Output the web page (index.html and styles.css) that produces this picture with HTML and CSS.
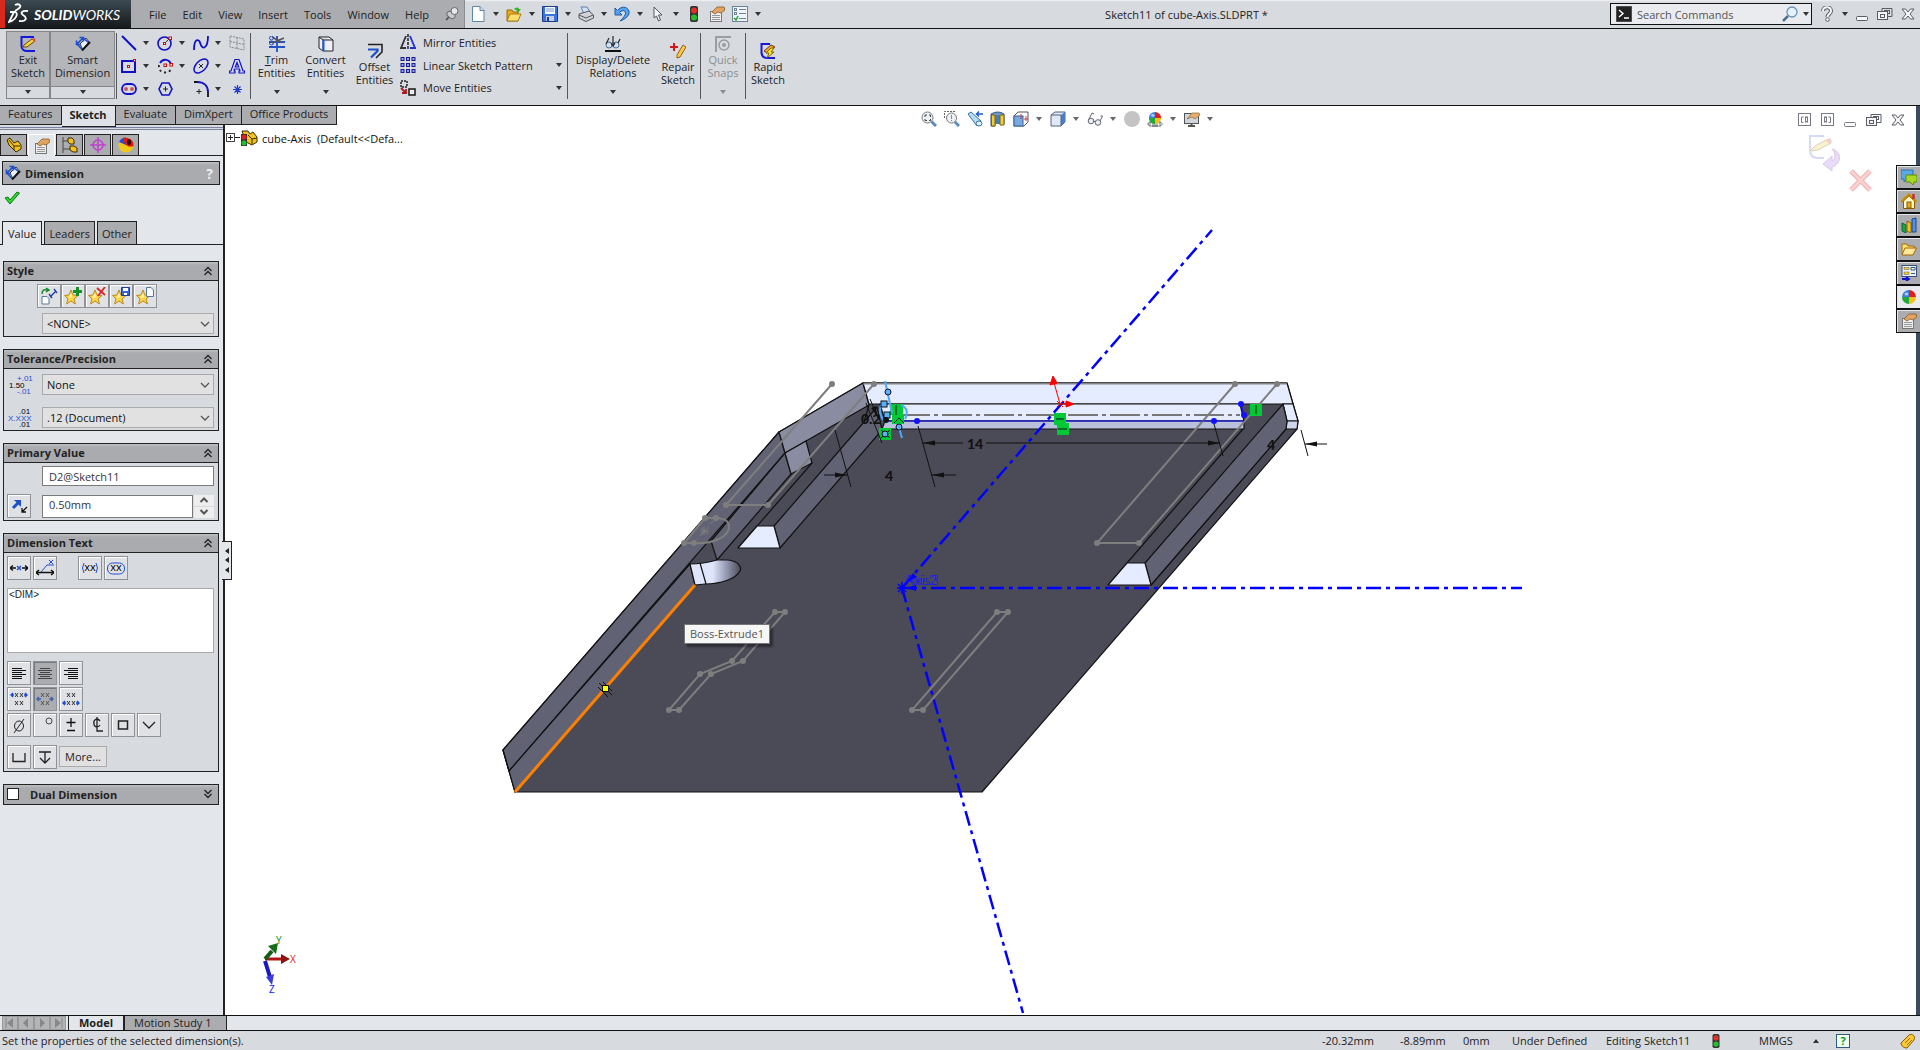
FILE: index.html
```html
<!DOCTYPE html>
<html lang="en">
<head>
    <meta charset="UTF-8">
    <meta name="viewport" content="width=device-width, initial-scale=1.0">
    <title>Sketch11 of cube-Axis.SLDPRT *</title>
    <link rel="stylesheet" href="styles.css">
</head>
<body>
    <svg class="defs" aria-hidden="true">
        <symbol id="star" viewBox="0 0 18 18"><path d="M7 3 L9 8 L14 8.500 L10 12 L11.500 17 L7 14 L2.500 17 L4 12 L0.500 8.500 L5 8 Z" fill="#ffd54a" stroke="#b98a1c"/><path d="M7 6 L8 9.500 L5 12 L5 9.500 Z" fill="#fff3b8"/></symbol>
        <symbol id="chev-up" viewBox="0 0 10 10"><path d="M1.500 5 L5 1.500 L8.500 5 M1.500 9 L5 5.500 L8.500 9" fill="none" stroke="#222" stroke-width="1.300"/></symbol>
        <symbol id="chev-down" viewBox="0 0 10 10"><path d="M1.500 1 L5 4.500 L8.500 1 M1.500 5 L5 8.500 L8.500 5" fill="none" stroke="#222" stroke-width="1.300"/></symbol>
        <symbol id="arrow-down" viewBox="0 0 10 6"><path d="M1 1 L5 5 L9 1" fill="none" stroke="#555" stroke-width="1.300"/></symbol>
        <symbol id="traffic" viewBox="0 0 16 16"><rect x="4" y="0" width="8" height="16" rx="2" fill="#333"/><circle cx="8" cy="4.500" r="3" fill="#e0302a"/><circle cx="8" cy="11.500" r="3" fill="#22c02c"/></symbol>
        <symbol id="hand-page" viewBox="0 0 16 16"><rect x="1.500" y="5.500" width="11" height="10" fill="#eee" stroke="#777"/><path d="M3 9.500 H11 M3 11.500 H11 M3 13.500 H11" stroke="#999"/><path d="M3 6 L8 1 L15 1 L16 4 L12 7 L9 6 L6 8 Z" fill="#e0a460" stroke="#7c4f1c" stroke-width=".7"/></symbol>
        <symbol id="dim" viewBox="0 0 16 16"><path d="M5 8 L11 2 L14 6 L8 14 Z" fill="#e8eefc" stroke="#333"/><path d="M1.500 8.500 L8.500 1.500 M1.500 4.500 V8.500 H5.500 M4.500 1.500 H8.500 V5.500" stroke="#1c4fd0" fill="none" stroke-width="1.600"/><path d="M2 8 L7 13.500 M8 2 L14 7" stroke="#1c4fd0" stroke-width="1.400"/><path d="M7 14.500 L15 6" stroke="#111" stroke-width="2"/></symbol>
        <symbol id="ball" viewBox="0 0 16 16"><path d="M8 8 V1 A7 7 0 0 0 1 8 Z" fill="#3a80e0"/><path d="M8 8 H15 A7 7 0 0 0 8 1 Z" fill="#e02020"/><path d="M8 8 H1 A7 7 0 0 0 8 15 Z" fill="#20a838"/><path d="M8 8 V15 A7 7 0 0 0 15 8 Z" fill="#f4c020"/><ellipse cx="5.500" cy="5" rx="2" ry="1.500" fill="#fff" opacity=".6"/></symbol>
        <symbol id="restore" viewBox="0 0 16 14"><path d="M5 1.500 H15 V9.500 H11 M5 1.500 V4.500" fill="none" stroke="#5a5d66"/><rect x="7.500" y="3.500" width="5" height="3" fill="none" stroke="#5a5d66"/><rect x=".5" y="4.500" width="10" height="8" fill="#f4f5f7" stroke="#5a5d66"/><rect x="3.500" y="7.500" width="4" height="3" fill="none" stroke="#5a5d66"/></symbol>
        <symbol id="close" viewBox="0 0 14 14"><path d="M1 2 H4.500 L7 5 L9.500 2 H13 L9 7 L13 12 H9.500 L7 9 L4.500 12 H1 L5 7 Z" fill="#f8f8fa" stroke="#5a5d66"/></symbol>
        <symbol id="part" viewBox="0 0 16 16"><path d="M1 3 L4 1 L8 6 L12 4 L15 8 V12 L10 15 L6 11 L3 8 Z" fill="#f2c11e" stroke="#3a2c00"/><path d="M3 3 L8 9 L14 9 M8 9 V13" fill="none" stroke="#3a2c00"/></symbol>
    </svg>

    <header class="menubar">
        <div class="logo">
            <svg width="22" height="22" viewBox="0 0 22 22"><path d="M7 2 C11 0 15 3 10 6 L7 8 M2 9 H7 C11 10 8 17 1 19 L6 9 M20 8 C14 7 12 10 15 12 C20 15 18 19 11 18" fill="none" stroke="#fff" stroke-width="1.800"/></svg>
            <span><b>SOLID</b>WORKS</span>
        </div>
        <nav class="menus">
            <button>File</button><button>Edit</button><button>View</button><button>Insert</button><button>Tools</button><button>Window</button><button>Help</button>
            <svg class="pin" width="14" height="14" viewBox="0 0 14 14"><path d="M1 13 L5 9" stroke="#444" stroke-width="1.500"/><ellipse cx="6" cy="8" rx="4.500" ry="3" transform="rotate(35 6 8)" fill="#c8cacf" stroke="#66686e"/><circle cx="9.500" cy="4" r="3.500" fill="#e8e8ec" stroke="#66686e"/></svg>
        </nav>
        <div class="quick">
            <button aria-label="New"><svg width="16" height="16" viewBox="0 0 16 16"><path d="M2.500 .5 H10 L14 4.500 V15.500 H2.500 Z" fill="#fdfeff" stroke="#5d86a8"/><path d="M10 .5 V4.500 H14" fill="#cfe0ee" stroke="#5d86a8"/></svg></button><i class="caret"></i>
            <button aria-label="Open"><svg width="16" height="16" viewBox="0 0 16 16"><path d="M1 4 H6 L7 6 H12 V15 H1 Z" fill="#e9a91c" stroke="#9c6a08"/><path d="M4 8 H15 L12 15 H1 Z" fill="#ffdf70" stroke="#b07c10"/><path d="M8 4 C9 1 12 1 13 3 L15 3 L12 7 L9.500 3 H11" fill="#3ab02c"/></svg></button><i class="caret"></i>
            <button aria-label="Save"><svg width="16" height="16" viewBox="0 0 16 16"><path d="M.5 .5 H15.500 V15.500 H.5 Z" fill="#3b74d8" stroke="#173c8c"/><rect x="3" y="1" width="10" height="7" fill="#f4f8ff"/><path d="M4 3 H12 M4 5 H12" stroke="#7c9ad0"/><rect x="4" y="10" width="8" height="5" fill="#c5cde0"/><rect x="5" y="11" width="2" height="4" fill="#173c8c"/></svg></button><i class="caret"></i>
            <button aria-label="Print"><svg width="16" height="16" viewBox="0 0 16 16"><path d="M3 1 H9 L12 6 L6 8 Z" fill="#cfe4fa" stroke="#5b80ac"/><path d="M1 8 L11 5 L15.500 9 V12 L8 15.500 L1 12 Z" fill="#d2d3d6" stroke="#55575c"/><path d="M1 9 L8 12 L15 9" fill="none" stroke="#55575c"/></svg></button><i class="caret"></i>
            <button aria-label="Undo"><svg width="16" height="16" viewBox="0 0 16 16"><path d="M1 2 V9 H8 L5.500 6.500 C9 3 13 5 11 9 C10 11 8 13 6 15 C12 13 16 9 15 5 C13 0 7 0 3.500 4.500 Z" fill="#56a2ec" stroke="#1c5aa8"/></svg></button><i class="caret"></i>
            <button aria-label="Select"><svg width="16" height="16" viewBox="0 0 16 16"><path d="M4 1 L12 9 H8.500 L10.500 14 L8.500 15 L6.500 10 L4 12 Z" fill="#f4f5f7" stroke="#55575c"/></svg></button><i class="caret"></i>
            <button aria-label="Rebuild"><svg width="16" height="16"><use href="#traffic"/></svg></button>
            <button aria-label="Properties"><svg width="16" height="16"><use href="#hand-page"/></svg></button>
            <button aria-label="Options"><svg width="16" height="16" viewBox="0 0 16 16"><rect x=".5" y=".5" width="15" height="15" fill="#eef4fa" stroke="#6d8296"/><rect x="2.500" y="2.500" width="2" height="2" fill="none" stroke="#6d8296"/><rect x="2.500" y="6.500" width="2" height="2" fill="none" stroke="#6d8296"/><path d="M7 3.500 H14 M7 7.500 H14 M7 12.500 H14" stroke="#6d8296"/><path d="M2 12 L4 14 L6 10" fill="none" stroke="#22a02c" stroke-width="1.500"/></svg></button><i class="caret"></i>
        </div>
        <div class="title">Sketch11 of cube-Axis.SLDPRT *</div>
        <div class="search">
            <svg width="16" height="16" viewBox="0 0 16 16"><rect width="16" height="16" fill="#222" stroke="#777"/><path d="M3 4 L7 7.500 L3 11 M8 12 H13" fill="none" stroke="#fff" stroke-width="1.400"/></svg>
            <input type="text" placeholder="Search Commands" aria-label="Search Commands">
            <svg width="16" height="16" viewBox="0 0 16 16"><path d="M1 15 L6 10" stroke="#4c7090" stroke-width="2.500"/><circle cx="10" cy="6" r="5" fill="#e4f2fc" stroke="#6f94b4" stroke-width="1.300"/></svg>
            <i class="caret"></i>
        </div>
        <div class="winbtns">
            <button aria-label="Help"><svg width="14" height="16" viewBox="0 0 14 16"><path d="M3 5 C3 0 11 0 11 5 C11 8 7.500 8 7.500 11" fill="none" stroke="#5a5d66" stroke-width="4"/><path d="M3 5 C3 0 11 0 11 5 C11 8 7.500 8 7.500 11" fill="none" stroke="#f8f8fa" stroke-width="2"/><circle cx="7.500" cy="13.500" r="1.800" fill="#f8f8fa" stroke="#5a5d66"/></svg></button><i class="caret"></i>
            <button aria-label="Minimize"><svg width="13" height="14" viewBox="0 0 13 14"><rect x=".5" y="9.500" width="11" height="4" rx="1" fill="#f8f8fa" stroke="#5a5d66"/></svg></button>
            <button aria-label="Restore"><svg width="16" height="14"><use href="#restore"/></svg></button>
            <button aria-label="Close"><svg width="14" height="14"><use href="#close"/></svg></button>
        </div>
    </header>

    <div class="ribbon">
        <button class="big pressed exit"><svg width="16" height="16" viewBox="0 0 16 16"><path d="M14 1 H1.500 V10 C1.500 13 4 15 7 15 H15" fill="none" stroke="#1618d8" stroke-width="2"/><path d="M4 9 L12 3 L15 5 L7 11 L3 11 Z" fill="#f8cf3c" stroke="#6a4a10"/><path d="M12 3 L15 2 L15.500 5 L14 6 Z" fill="#e05048"/></svg><span>Exit<br>Sketch</span><i class="caret"></i></button>
        <button class="big pressed smart"><svg width="16" height="16"><use href="#dim"/></svg><span>Smart<br>Dimension</span><i class="caret"></i></button>
        <div class="sep"></div>
        <div class="tools">
            <button aria-label="Line"><svg width="16" height="16" viewBox="0 0 16 16"><path d="M1 1 L15 15" stroke="#1010c8" stroke-width="2"/></svg><i class="caret"></i></button>
            <button aria-label="Circle"><svg width="16" height="16" viewBox="0 0 16 16"><circle cx="7.500" cy="8.500" r="6.500" fill="none" stroke="#1010c8" stroke-width="1.600"/><path d="M8 8 L12 4" stroke="#333"/><rect x="6.500" y="7.500" width="2" height="2" fill="#fff" stroke="#c01010"/><rect x="12" y="2" width="2.500" height="2.500" fill="#fff" stroke="#c01010"/></svg><i class="caret"></i></button>
            <button aria-label="Spline"><svg width="16" height="16" viewBox="0 0 16 16"><path d="M1 15 C1 3 6 3 7.500 9 C9 15 15 14 15 1" fill="none" stroke="#1010c8" stroke-width="1.800"/></svg><i class="caret"></i></button>
            <button aria-label="Plane"><svg width="16" height="16" viewBox="0 0 16 16"><path d="M1 1 L15 4 V15 L1 12 Z M1 6.500 L15 9.500 M8 2.500 V13.500" fill="none" stroke="#888" stroke-dasharray="2 1"/></svg></button>
            <button aria-label="Rectangle"><svg width="16" height="16" viewBox="0 0 16 16"><rect x="1" y="3" width="13" height="11" fill="none" stroke="#1010c8" stroke-width="2"/><rect x="6.500" y="7.500" width="2" height="2" fill="#fff" stroke="#c01010"/><rect x="12.500" y="1.500" width="2" height="2" fill="#fff" stroke="#c01010"/></svg><i class="caret"></i></button>
            <button aria-label="Arc"><svg width="16" height="16" viewBox="0 0 16 16"><path d="M3 5 C6 0 13 1 14 7" fill="none" stroke="#1010c8" stroke-width="1.800"/><path d="M2 7 C1 14 8 17 14 12" fill="none" stroke="#222" stroke-width="1.800" stroke-dasharray="2 3"/><rect x="7" y="6" width="2.500" height="2.500" fill="#fff" stroke="#c01010"/><rect x="13" y="5.500" width="2.500" height="2.500" fill="#fff" stroke="#c01010"/></svg><i class="caret"></i></button>
            <button aria-label="Ellipse"><svg width="16" height="16" viewBox="0 0 16 16"><ellipse cx="8" cy="8" rx="8.500" ry="5" transform="rotate(-45 8 8)" fill="none" stroke="#1010c8" stroke-width="1.500"/><path d="M6 6 L10 10 M10 6 L6 10" stroke="#222"/></svg><i class="caret"></i></button>
            <button aria-label="Text"><svg width="16" height="16" viewBox="0 0 16 16"><path d="M6 1.500 H10 L14 13 H15.500 V15 H10 V13 H11 L10.500 11 H5.500 L5 13 H6 V15 H.5 V13 H2 Z M8 4.500 L6.300 9 H9.700 Z" fill="#dde4fa" stroke="#1010c8" stroke-width="1.200"/></svg></button>
            <button aria-label="Slot"><svg width="16" height="16" viewBox="0 0 16 16"><rect x="1" y="3" width="14" height="10" rx="5" fill="none" stroke="#1010c8" stroke-width="1.800"/><rect x="4" y="7" width="2" height="2" fill="#fff" stroke="#c01010"/><rect x="10" y="7" width="2" height="2" fill="#fff" stroke="#c01010"/></svg><i class="caret"></i></button>
            <button aria-label="Polygon"><svg width="16" height="16" viewBox="0 0 16 16"><path d="M5 2 H12 L15 8 L12 14 H5 L2 8 Z" fill="none" stroke="#1010c8" stroke-width="1.600"/><path d="M8.500 5.500 V10.500 M6 8 H11" stroke="#222"/></svg></button>
            <button aria-label="Fillet"><svg width="16" height="16" viewBox="0 0 16 16"><path d="M1 1 H4" stroke="#111" stroke-width="2"/><path d="M4 1 C11 1 15 5 15 11" fill="none" stroke="#1010c8" stroke-width="1.800"/><path d="M15 11 V16" stroke="#111" stroke-width="1.800"/><path d="M6 8 V13 M3.500 10.500 H8.500" stroke="#222"/></svg><i class="caret"></i></button>
            <button aria-label="Point"><svg width="16" height="16" viewBox="0 0 16 16"><path d="M8.500 4 V13 M4 8.500 H13 M5.500 5.500 L11.500 11.500 M11.500 5.500 L5.500 11.500" stroke="#1c3cd0" stroke-width="1.200"/></svg></button>
        </div>
        <div class="sep"></div>
        <button class="big"><svg width="16" height="16" viewBox="0 0 16 16"><path d="M0 6 H16 M0 11 H16 M8 0 V16" stroke="#2450c8" stroke-width="1.800"/><path d="M3 1 L12 6 M3 7 L15 2" stroke="#555" stroke-width="1.500"/><circle cx="2.500" cy="2" r="2" fill="none" stroke="#2450c8"/><circle cx="2.500" cy="7" r="2" fill="none" stroke="#2450c8"/></svg><span><u>T</u>rim<br>Entities</span><i class="caret"></i></button>
        <button class="big"><svg width="16" height="16" viewBox="0 0 16 16"><path d="M1 1 H11 L15 4 V15 H5 L1 12 Z M1 1 L5 4 H15 M5 4 V15" fill="#eef0f5" stroke="#222"/><path d="M5.500 4 V15" stroke="#1c5ae0" stroke-width="2"/></svg><span>Convert<br>Entities</span><i class="caret"></i></button>
        <button class="big low"><svg width="16" height="16" viewBox="0 0 16 16"><path d="M1 1.500 H15 V9 L9 15" fill="none" stroke="#222" stroke-width="1.600"/><path d="M1 6.500 H10.500 V8 L4 14.500" fill="none" stroke="#1c4fd0" stroke-width="2.200"/></svg><span>Offset<br>Entities</span></button>
        <div class="rows">
            <button><svg width="16" height="16" viewBox="0 0 16 16"><path d="M6 2 L1 14 H6" fill="none" stroke="#333" stroke-width="1.800"/><path d="M10 2 L15 14 H10" fill="none" stroke="#1c30d0" stroke-width="1.800"/><path d="M8 0 V16" stroke="#222" stroke-width="1.500" stroke-dasharray="3 1"/></svg><span>Mirror Entities</span></button>
            <button><svg width="16" height="16" viewBox="0 0 16 16"><path d="M2.500 0 V16 M8 0 V16 M13.500 0 V16" stroke="#1c1c90" stroke-width="4" stroke-dasharray="4 2"/><path d="M2.500 1 V16 M8 1 V16 M13.500 1 V16" stroke="#8ea0f0" stroke-width="2" stroke-dasharray="2 4"/></svg><span>Linear Sketch Pattern</span><i class="caret"></i></button>
            <button><svg width="16" height="16" viewBox="0 0 16 16"><rect x="1" y="1" width="6" height="6" fill="none" stroke="#222" stroke-dasharray="2 1" stroke-width="1.500"/><rect x="9" y="9" width="6" height="6" fill="#eee" stroke="#222" stroke-width="1.600"/><path d="M1 8 L6 13 M6 9 V13 H2" fill="none" stroke="#b01818" stroke-width="1.800"/></svg><span>Move Entities</span><i class="caret"></i></button>
        </div>
        <div class="sep"></div>
        <button class="big wide"><svg width="16" height="16" viewBox="0 0 16 16"><circle cx="4" cy="9" r="3" fill="#cfe0f4" stroke="#4a6c94"/><circle cx="11" cy="9" r="3" fill="#cfe0f4" stroke="#4a6c94"/><path d="M1 8 L4 2 M13 7 L15 3 M8 0 V9 M6 7 L8 10 L10 7" fill="none" stroke="#333" stroke-width="1.300"/><path d="M0 15 H16" stroke="#111" stroke-width="2"/></svg><span>Display/Delete<br>Relations</span><i class="caret"></i></button>
        <button class="big low narrow"><svg width="16" height="16" viewBox="0 0 16 16"><path d="M4 0 V8 M0 4 H8" stroke="#d01818" stroke-width="2"/><path d="M13 2 L16 4 L10 14 L7 15 V12 Z" fill="#f8cf3c" stroke="#a05818"/></svg><span>Repair<br>Sketch</span></button>
        <div class="sep"></div>
        <button class="big narrow" disabled><svg width="16" height="16" viewBox="0 0 16 16"><path d="M1 16 V1 H16" fill="none" stroke="#9a9ca0" stroke-width="2"/><circle cx="9" cy="9" r="5" fill="none" stroke="#9a9ca0" stroke-width="1.500"/><circle cx="9" cy="9" r="2" fill="#9a9ca0"/></svg><span>Quick<br>Snaps</span><i class="caret"></i></button>
        <div class="sep"></div>
        <button class="big low narrow"><svg width="16" height="16" viewBox="0 0 16 16"><path d="M10 1 H1.500 V10 C2 13 4 15 7 15 H15" fill="none" stroke="#1618d8" stroke-width="2"/><path d="M4 8 L11 2 L15 4 L7 10 Z" fill="#f0a83c" stroke="#6a3a10"/><path d="M11 5 L6 10 H9 L7 15 L14 9 H11 L14 5 Z" fill="#ffe830" stroke="#7a6208"/></svg><span>Rapid<br>Sketch</span></button>
    </div>

    <div class="workspace">
        <nav class="cmdtabs">
            <button>Features</button><button class="active">Sketch</button><button>Evaluate</button><button>DimXpert</button><button>Office Products</button>
        </nav>

        <aside class="panel">
            <div class="ptabs">
                <button aria-label="Feature tree"><svg width="16" height="16"><use href="#part"/></svg></button>
                <button class="active" aria-label="Property manager"><svg width="16" height="16"><use href="#hand-page"/></svg></button>
                <button aria-label="Configurations"><svg width="16" height="16" viewBox="0 0 16 16"><path d="M1 0 V16 M1 4 H6 M1 12 H8" stroke="#444"/><path d="M6 1 H10 L12 3 V7 H8 L6 5 Z M8 9 H12 L15 11 V15 H11 L8 13 Z" fill="#f2c11e" stroke="#3a2c00"/></svg></button>
                <button aria-label="DimXpert manager"><svg width="16" height="16" viewBox="0 0 16 16"><circle cx="8" cy="8" r="5" fill="none" stroke="#c040d0" stroke-width="1.500"/><path d="M8 0 V16 M0 8 H16" stroke="#c040d0" stroke-width="1.500"/></svg></button>
                <button aria-label="Display manager"><svg width="16" height="16" viewBox="0 0 16 16"><circle cx="8" cy="8" r="7.500" fill="#f0c818"/><path d="M8 8 L1 5 A7.500 7.500 0 0 1 8 .5 Z" fill="#2848d8"/><path d="M6 .8 C12 0 16 4 15.500 9 C12 11 8 9 6 5 Z" fill="#d81818"/><ellipse cx="11" cy="5" rx="2" ry="3" fill="#300"/></svg></button>
            </div>
            <div class="pm-title">
                <svg width="16" height="16"><use href="#dim"/></svg><b>Dimension</b><span class="q">?</span>
            </div>
            <button class="ok" aria-label="OK"><svg width="16" height="14" viewBox="0 0 16 14"><path d="M1 7 L4 6 L6 9 L13 1 L15.500 2 L6 13 Z" fill="#2cd82c" stroke="#0c7a14"/></svg></button>
            <div class="vtabs"><button class="active">Value</button><button>Leaders</button><button>Other</button></div>

            <section class="box">
                <h2>Style<svg width="10" height="10"><use href="#chev-up"/></svg></h2>
                <div class="btnrow stars">
                    <button class="tb" aria-label="Apply default"><svg width="18" height="18" viewBox="0 0 18 18"><path d="M2 9.500 H7 L9 11.500 V17 H2 Z" fill="#fff" stroke="#56789a"/><path d="M2 7 C2 3 4 2 8 3 M6 1 L9 3 L6 5" fill="none" stroke="#1a8a2a" stroke-width="1.500"/><path d="M10 10 L16 4 M9 7 L12 11 M14 2 L17 6" stroke="#1c3ca0" stroke-width="1.300"/></svg></button>
                    <button class="tb" aria-label="Add style"><svg width="18" height="18"><use href="#star"/><path d="M13.500 0 V9 M9 4.500 H18" stroke="#18902a" stroke-width="3"/></svg></button>
                    <button class="tb" aria-label="Delete style"><svg width="18" height="18"><use href="#star"/><path d="M9 1 L17 8 M17 0 L10 9" stroke="#d02828" stroke-width="1.800"/></svg></button>
                    <button class="tb" aria-label="Save style"><svg width="18" height="18"><use href="#star"/><path d="M9.500 .5 H17.500 V8.500 H9.500 Z" fill="#3a68d0" stroke="#1c3c90"/><path d="M11 1 H16 V4 H11 Z M12 6 H15 V8 H12 Z" fill="#fff"/></svg></button>
                    <button class="tb" aria-label="Load style"><svg width="18" height="18"><use href="#star"/><path d="M10.500 .5 H15 L17.500 3 V9.500 H10.500 Z" fill="#f6faff" stroke="#56789a"/></svg></button>
                </div>
                <div class="field"><span></span><div class="sel"><select aria-label="Style"><option>&lt;NONE&gt;</option></select><svg width="10" height="6"><use href="#arrow-down"/></svg></div></div>
            </section>

            <section class="box">
                <h2>Tolerance/Precision<svg width="10" height="10"><use href="#chev-up"/></svg></h2>
                <div class="field gap"><svg width="28" height="21" viewBox="0 0 28 21" class="mini"><text x="10" y="7" fill="#1c4fd0">+.01</text><text x="2" y="14">1.50</text><text x="10" y="20" fill="#1c4fd0">-.01</text></svg><div class="sel"><select aria-label="Tolerance type"><option>None</option></select><svg width="10" height="6"><use href="#arrow-down"/></svg></div></div>
                <div class="field"><svg width="28" height="21" viewBox="0 0 28 21" class="mini"><text x="12" y="7">.01</text><text x="1" y="14" fill="#1c4fd0">X.XXX</text><text x="12" y="20">.01</text></svg><div class="sel"><select aria-label="Precision"><option>.12 (Document)</option></select><svg width="10" height="6"><use href="#arrow-down"/></svg></div></div>
            </section>

            <section class="box">
                <h2>Primary Value<svg width="10" height="10"><use href="#chev-up"/></svg></h2>
                <div class="field name"><span></span><input type="text" value="D2@Sketch11" aria-label="Name"></div>
                <div class="field val">
                    <button class="tb" aria-label="Reverse"><svg width="18" height="18" viewBox="0 0 18 18"><path d="M3 11 L8 6" stroke="#1c4fd0" stroke-width="3"/><path d="M4 3 H11 V10 Z" fill="#1c4fd0"/><path d="M17 10 L12 15 M12 11 V15 H16" fill="none" stroke="#111" stroke-width="1.300"/></svg></button>
                    <input type="text" value="0.50mm" aria-label="Value">
                    <div class="spin"><button aria-label="Up"><svg width="10" height="6" viewBox="0 0 10 6"><path d="M1.500 5 L5 1.500 L8.500 5" fill="none" stroke="#555" stroke-width="2"/></svg></button><button aria-label="Down"><svg width="10" height="6" viewBox="0 0 10 6"><path d="M1.500 1 L5 4.500 L8.500 1" fill="none" stroke="#555" stroke-width="2"/></svg></button></div>
                </div>
            </section>

            <section class="box dimtext">
                <h2>Dimension Text<svg width="10" height="10"><use href="#chev-up"/></svg></h2>
                <div class="btnrow">
                    <button class="tb" aria-label="Center dimension"><svg width="18" height="18" viewBox="0 0 18 18"><path d="M0 9 H6 M12 9 H18 M3 6.500 L0 9 L3 11.500 M15 6.500 L18 9 L15 11.500" fill="none" stroke="#111" stroke-width="1.400"/><path d="M7 7 L11 11 M11 7 L7 11" stroke="#1c4fd0" stroke-width="1.400"/></svg></button>
                    <button class="tb" aria-label="Offset text"><svg width="18" height="18" viewBox="0 0 18 18"><path d="M0 13.500 H18 M3 11 L0 13.500 L3 16 M15 11 L18 13.500 L15 16" fill="none" stroke="#111" stroke-width="1.400"/><path d="M5 13 L11 6 H18 M13 1 L17 5 M17 1 L13 5" stroke="#1c4fd0" fill="none"/></svg></button>
                    <button class="tb second" aria-label="Add parentheses"><svg width="18" height="18" viewBox="0 0 18 18"><path d="M3 4 Q0 9 3 14 M15 4 Q18 9 15 14" fill="none" stroke="#1c4fd0"/><text x="9" y="12" text-anchor="middle">xx</text></svg></button>
                    <button class="tb" aria-label="Inspection dimension"><svg width="18" height="18" viewBox="0 0 18 18"><rect x=".5" y="4" width="17" height="11" rx="5" fill="none" stroke="#1c4fd0"/><text x="9" y="12" text-anchor="middle">xx</text></svg></button>
                </div>
                <textarea aria-label="Dimension text">&lt;DIM&gt;</textarea>
                <div class="btnrow tight">
                    <button class="tb" aria-label="Left"><svg width="18" height="18" viewBox="0 0 18 18"><path d="M2 4.500 H12 M2 6.500 H16 M2 8.500 H12 M2 10.500 H16 M2 12.500 H12 M2 14.500 H12" stroke="#111"/></svg></button>
                    <button class="tb on" aria-label="Center"><svg width="18" height="18" viewBox="0 0 18 18"><path d="M4 4.500 H14 M2 6.500 H16 M4 8.500 H14 M2 10.500 H16 M4 12.500 H14 M2 14.500 H16" stroke="#444"/></svg></button>
                    <button class="tb" aria-label="Right"><svg width="18" height="18" viewBox="0 0 18 18"><path d="M6 4.500 H16 M2 6.500 H16 M6 8.500 H16 M2 10.500 H16 M6 12.500 H16 M6 14.500 H16" stroke="#111"/></svg></button>
                </div>
                <div class="btnrow tight">
                    <button class="tb" aria-label="Top"><svg width="18" height="18" viewBox="0 0 18 18"><path d="M1 5 H4 M14 5 H17 M3 3 L1 5 L3 7 M15 3 L17 5 L15 7" fill="none" stroke="#1c4fd0" stroke-width="1.500"/><path d="M5 3 L8 7 M8 3 L5 7 M10 3 L13 7 M13 3 L10 7 M5 11 L8 15 M8 11 L5 15 M10 11 L13 15 M13 11 L10 15" stroke="#333"/></svg></button>
                    <button class="tb on" aria-label="Middle"><svg width="18" height="18" viewBox="0 0 18 18"><path d="M1 9 H5 M13 9 H17 M3 7 L1 9 L3 11 M15 7 L17 9 L15 11" fill="none" stroke="#3f62b4" stroke-width="1.500"/><path d="M5 3 L8 7 M8 3 L5 7 M10 3 L13 7 M13 3 L10 7 M5 11 L8 15 M8 11 L5 15 M10 11 L13 15 M13 11 L10 15" stroke="#555"/></svg></button>
                    <button class="tb" aria-label="Bottom"><svg width="18" height="18" viewBox="0 0 18 18"><path d="M1 13 H4 M14 13 H17 M3 11 L1 13 L3 15 M15 11 L17 13 L15 15" fill="none" stroke="#1c4fd0" stroke-width="1.500"/><path d="M5 3 L8 7 M8 3 L5 7 M10 3 L13 7 M13 3 L10 7 M5 11 L8 15 M8 11 L5 15 M10 11 L13 15 M13 11 L10 15" stroke="#333"/></svg></button>
                </div>
                <div class="btnrow tight">
                    <button class="tb" aria-label="Diameter"><svg width="18" height="18" viewBox="0 0 18 18"><ellipse cx="9" cy="10" rx="4.500" ry="5" fill="none" stroke="#222"/><path d="M4 17 L14 3" stroke="#222"/></svg></button>
                    <button class="tb" aria-label="Degree"><svg width="18" height="18" viewBox="0 0 18 18"><circle cx="13" cy="5" r="3" fill="none" stroke="#444"/></svg></button>
                    <button class="tb" aria-label="Plus minus"><svg width="18" height="18" viewBox="0 0 18 18"><path d="M9 2 V11 M4.500 6.500 H13.500 M5 14.500 H13" stroke="#111" stroke-width="1.300"/></svg></button>
                    <button class="tb" aria-label="Centerline"><svg width="18" height="18" viewBox="0 0 18 18"><path d="M12 5 C9 1 5 4 6 8 C6 11 10 12 12 9 M9 1 V15 H15" fill="none" stroke="#222" stroke-width="1.300"/></svg></button>
                    <button class="tb" aria-label="Square"><svg width="18" height="18" viewBox="0 0 18 18"><rect x="4.500" y="5" width="9" height="8" fill="none" stroke="#222" stroke-width="1.500"/></svg></button>
                    <button class="tb" aria-label="Countersink"><svg width="18" height="18" viewBox="0 0 18 18"><path d="M3 6 L9 12 L15 6" fill="none" stroke="#222" stroke-width="1.300"/></svg></button>
                </div>
                <div class="btnrow tight last">
                    <button class="tb" aria-label="Counterbore"><svg width="18" height="18" viewBox="0 0 18 18"><path d="M3 5 V13.500 H15 V5" fill="none" stroke="#222" stroke-width="1.300"/></svg></button>
                    <button class="tb" aria-label="Depth"><svg width="18" height="18" viewBox="0 0 18 18"><path d="M3 4 H15 M9 4 V15 M4 10 L9 15 L14 10" fill="none" stroke="#222" stroke-width="1.300"/></svg></button>
                    <button class="more">More...</button>
                </div>
            </section>

            <section class="box dual">
                <h2><input type="checkbox" id="dual"><label for="dual">Dual Dimension</label><svg width="10" height="10"><use href="#chev-down"/></svg></h2>
            </section>
            <button class="splitter" aria-label="Collapse panel"><i></i><i></i><i></i></button>
        </aside>

        <main class="view">
            <svg class="scene" viewBox="225 105 1691 909">
                <defs>
                    <linearGradient id="disc" x1="0" x2="1"><stop offset=".45" stop-color="#dfe5fa"/><stop offset=".7" stop-color="#9a9fb8"/><stop offset="1" stop-color="#4a4b57"/></linearGradient>
                    <marker id="ah" viewBox="0 0 12 6" refX="12" refY="3" markerWidth="12" markerHeight="6" markerUnits="userSpaceOnUse" orient="auto-start-reverse"><path d="M0 0.500 L12 3 L0 5.500 Z" fill="#111"/></marker>
                </defs>
                <!-- solid body -->
                <g stroke="#111" stroke-width="1.200" stroke-linejoin="round">
                    <path d="M503 749 L779 431 L863 382 H1287 L1298 420 L1297 428 L982 791 H515 Z" fill="#4a4b57"/>
                    <path d="M503 749 L779 431 L785 452 L509 770 Z" fill="#616374"/>
                    <path d="M509 770 L690 563 L695 584 L515 791 L503 749" fill="#616374"/>
                    <path d="M711 540 L785 452 L791 473 L717 559 Z" fill="#616374"/>
                    <path d="M779 431 L863 382 L869 404 L785 452 Z" fill="#8a8da2"/>
                    <path d="M785 452 L806 440 L812 462 L791 473 Z" fill="#8a8da2"/>
                    <path d="M812 462 L738 547 M869 404 L864 421" fill="none"/>
                    <path d="M774 525 L877 406 L882 429 L780 547 Z" fill="#616374"/>
                    <path d="M757 525 H774 L780 547 H738 Z" fill="#e6ecff"/>
                    <path d="M690 563 Q703 563 717 559 H728 C738 560 742 566 740 570 C736 578 720 583 705 583 L695 584 Z" fill="url(#disc)"/>
                    <path d="M700 562 L706 583" fill="none"/>
                    <path d="M863 382 H1287 L1293 403 H869 Z" fill="#e6ecff"/>
                    <path d="M1283 403 H1293 L1298 420 H1287 Z" fill="#e6ecff"/>
                    <path d="M1287 420 H1298 L1297 428 H1286 Z" fill="#cfd5ea"/>
                    <path d="M880 403 H1240 L1244 420 H885 Z" fill="#e6ecff"/>
                    <path d="M885 420 H1244 V428 H882 Z" fill="#bac0dc"/>
                    <path d="M1127 562 L1243 428 M1151 584 L1286 428" fill="none"/>
                    <path d="M1145 562 L1283 403 L1287 420 L1286 428 L1151 584 Z" fill="#616374"/>
                    <path d="M1127 562 H1145 L1151 584 H1108 Z" fill="#e6ecff"/>
                </g>
                <path d="M863 383 H1287" stroke="#888" stroke-width="1"/>
                <path d="M900 414 H1240" stroke="#777" stroke-width="2" stroke-dasharray="30 4 4 4"/>

                <!-- inactive sketches -->
                <g fill="none" stroke="#7e7e7e" stroke-width="2">
                    <path d="M832 383 L726 504 H768 L874 383"/>
                    <path d="M1235 383 L1097 542 H1139 L1277 383"/>
                    <path d="M694 542 H684 L705 517 H716 C733 517 733 532 719 538 Q708 543 694 542"/>
                    <path d="M716 517 L694 542" stroke-width="1" stroke-dasharray="8 3 2 3"/>
                    <path d="M701 527 L708 533 M708 527 L701 533 M704 526 V534 M700 530 H709" stroke-width="1"/>
                    <path d="M669 709 H679 L711 673 L743 660 L785 611 H775 L732 660 L700 673 Z"/>
                    <path d="M997 611 H1008 L923 709 H912 Z"/>
                </g>
                <path d="M832 383h0 M874 383h0 M726 504h0 M768 504h0 M1235 383h0 M1277 383h0 M1097 542h0 M1139 542h0 M705 517h0 M716 517h0 M684 542h0 M694 542h0 M669 709h0 M679 709h0 M711 673h0 M743 660h0 M785 611h0 M775 611h0 M732 660h0 M700 673h0 M997 611h0 M1008 611h0 M923 709h0 M912 709h0" stroke="#7e7e7e" stroke-width="6" stroke-linecap="round"/>

                <!-- picked edge -->
                <path d="M515 791 L695 584" stroke="#ff8000" stroke-width="3"/>
                <path d="M599 682 L612 694 M598 686 L608 696 M603 681 L612 690" stroke="#111"/>
                <rect x="602.500" y="684.500" width="6" height="6" fill="#ffff00" stroke="#111"/>

                <!-- active sketch -->
                <g fill="none" stroke="#1111ff">
                    <path d="M886 420 H1244 M1241 403 L1244 414" stroke-width="1.200"/>
                    <path d="M917 420h0 M1214 420h0 M1241 403h0 M1244 414h0" stroke-width="6" stroke-linecap="round"/>
                </g>
                <g fill="#00c837">
                    <rect x="890" y="403" width="13" height="11"/><rect x="892" y="413" width="12" height="10"/><rect x="879" y="427" width="12" height="12"/>
                    <rect x="1054" y="412" width="12" height="12"/><rect x="1057" y="422" width="12" height="12"/><rect x="1250" y="403" width="12" height="12"/>
                </g>
                <path d="M896 404 V414 M1256 404 V413 M1056 418 H1064 M1058 428 H1067 M894 422 L899 417 L904 422 M881 437 L890 429 M881 429 L890 437" stroke="#111" fill="none"/>
                <path d="M885 380 L892 412 M898 423 L902 437 M901 404 Q910 408 905 418 M883 400 Q876 412 886 422" stroke="#4fa8ff" stroke-width="2" fill="none"/>
                <g fill="#5ab0ff" stroke="#111"><circle cx="888" cy="391" r="3"/><circle cx="899" cy="426" r="3"/><circle cx="885" cy="433" r="3"/><rect x="881" y="400" width="6" height="6"/><rect x="884" y="411" width="6" height="6"/></g>

                <!-- dimensions -->
                <g stroke="#111" fill="none">
                    <path d="M918 425 L935 486 M1214 423 L1223 455 M835 429 L851 486 M1301 429 L1308 455 M866 402 L882 442"/>
                    <path d="M963 442 H923" marker-end="url(#ah)"/><path d="M986 442 H1220" marker-end="url(#ah)"/>
                    <path d="M824 474 H847" marker-end="url(#ah)"/><path d="M956 474 H932" marker-end="url(#ah)"/>
                    <path d="M1327 443 H1305" marker-end="url(#ah)"/><path d="M870 398 L878 417" marker-end="url(#ah)"/>
                </g>
                <g class="dimval"><text x="967" y="448">14</text><text x="885" y="480">4</text><text x="1267" y="449">4</text><text x="861" y="423">0.2</text></g>
                <circle cx="886" cy="419" r="3" fill="#111"/>

                <!-- reference axes -->
                <g stroke="#0000ff" stroke-width="2.500" stroke-dasharray="15 5 4 5" fill="none">
                    <path d="M902 587 H1522"/><path d="M902 587 L1212 229"/><path d="M902 587 L1023 1012"/>
                </g>
                <path d="M897 587 H907 M902 581 V593 M898 583 L906 591 M906 583 L898 591" stroke="#0000ff" stroke-width="1.500"/>
                <path d="M906 587 L916 584 V590 Z M906 582 L913 572 L917 576 Z" fill="#0000ff"/>
                <g class="axisname"><text x="904" y="584">Axis2</text><text x="906" y="584">Axis3</text></g>
                <g stroke="#ff0000" fill="#ff0000"><path d="M1060 403 L1053 378 M1060 403 H1070 M1057 400 L1063 406 M1063 400 L1057 406"/><path d="M1053 375 L1050 384 L1057 382 Z M1074 403 L1066 400 V406 Z"/></g>

                <!-- view triad -->
                <path d="M265 958 H282" stroke="#b01616" stroke-width="3"/><path d="M290 958 L281 953 V963 Z" fill="#8c1414"/>
                <path d="M265 958 L272 950" stroke="#185c18" stroke-width="4"/><path d="M278 942 L268 945 L276 953 Z" fill="#186c18"/>
                <path d="M265 960 L270 976" stroke="#1818c0" stroke-width="4"/><path d="M272 984 L266 976 L274 973 Z" fill="#3a3ae0"/>
                <g class="triad"><text x="290" y="962" fill="#e02020">X</text><text x="276" y="943" fill="#128a12">Y</text><text x="269" y="992" fill="#1414f0">Z</text></g>
            </svg>
            <div class="flyout">
                <svg width="32" height="16" viewBox="0 0 32 16"><rect x=".5" y="3.500" width="8" height="8" fill="#fff" stroke="#444"/><path d="M2 7.500 H7 M4.500 5 V10 M9 7.500 H14" stroke="#222"/><path d="M16 1 H22 L24 4 L27 2 L31 7 V12 L26 15 L20 12 Z" fill="#f2c11e" stroke="#3a2c00"/><path d="M22 5 L26 9 L31 8 M26 9 V14" stroke="#3a2c00" fill="none"/><rect x="15" y="4" width="6" height="12" fill="#333"/><circle cx="18" cy="7" r="2.500" fill="#e02020"/><circle cx="18" cy="13" r="2.500" fill="#20c030"/></svg>
                <span>cube-Axis&nbsp; (Default&lt;&lt;Defa...</span>
            </div>
            <div class="hud">
                <button aria-label="Zoom to fit"><svg width="16" height="16" viewBox="0 0 16 16"><circle cx="6.500" cy="6.500" r="5.500" fill="#eef2f6" stroke="#777"/><path d="M10.500 10.500 L15 15" stroke="#5a8cc4" stroke-width="3"/><path d="M4 6 V4 H6 M8 4 H9.500 V6 M9.500 8 V9.500 H8 M6 9.500 H4 V8" fill="none" stroke="#444"/></svg></button>
                <button aria-label="Zoom to area"><svg width="16" height="16" viewBox="0 0 16 16"><path d="M.5 7 V.5 H12" fill="none" stroke="#666" stroke-dasharray="2 1"/><circle cx="7.500" cy="7" r="5" fill="#eef2f6" stroke="#777"/><path d="M11 11 L15 15" stroke="#5a8cc4" stroke-width="3"/><path d="M7.500 4 V8 M7.500 9 V10" stroke="#888"/></svg></button>
                <button aria-label="Previous view"><svg width="16" height="16" viewBox="0 0 16 16"><path d="M1 3 L4 1 L14 10 L10 15 Z" fill="#b9dcf6" stroke="#35719c"/><ellipse cx="12" cy="12.500" rx="3" ry="2.500" fill="#dff0fc" stroke="#35719c"/><path d="M16 3 H10 M12 .5 L9.500 3 L12 5.500" fill="none" stroke="#1c5ad0" stroke-width="1.500"/></svg></button>
                <button aria-label="Section view"><svg width="16" height="16" viewBox="0 0 16 16"><path d="M1 3 Q8 -1 14 3 V13 H10 V7 H5 V15 H1 Z" fill="#6f9ad0" stroke="#35537c"/><path d="M5 4 H10 V13 H5 Z" fill="#4f7cb8"/><path d="M1.500 4 H5 V15 H1.500 Z M10 4 H14 V14 H10 Z" fill="#ecd040" stroke="#7c6408"/></svg></button>
                <button aria-label="View orientation"><svg width="16" height="16" viewBox="0 0 16 16"><path d="M1 5 L5 1 H15 V11 L11 15 H1 Z" fill="#fff" stroke="#555"/><rect x="1" y="5" width="9" height="10" fill="#7aa8e0" stroke="#38609c"/><path d="M8 3 V8 M13 5 V10 M11 8 H15" stroke="#d04040"/></svg></button><i class="caret"></i>
                <button aria-label="Display style"><svg width="16" height="16" viewBox="0 0 16 16"><path d="M1 4 L5 1 H15 V11 L11 15 H1 Z" fill="#dfe9f8" stroke="#55657c"/><path d="M11 4 L15 1 V11 L11 15 Z" fill="#4c7cc8"/><path d="M1 4 H11 V15" fill="none" stroke="#55657c"/></svg></button><i class="caret"></i>
                <button aria-label="Hide/show items"><svg width="16" height="16" viewBox="0 0 16 16"><circle cx="4" cy="10" r="2.800" fill="#eaf0f6" stroke="#667"/><circle cx="11" cy="11.500" r="2.800" fill="#eaf0f6" stroke="#667"/><path d="M1.500 9 L5 2 L7 3 M13 10 L15.500 5 L13.500 5 M7 10.500 H8" fill="none" stroke="#667"/></svg></button><i class="caret"></i>
                <button aria-label="Edit appearance"><svg width="16" height="16" viewBox="0 0 16 16"><circle cx="8" cy="8" r="8" fill="#c4c4c4"/></svg></button>
                <button aria-label="Apply scene"><svg width="16" height="16" viewBox="0 0 16 16"><path d="M0 13 L4 9 H12 L16 13 L13 16 H3 Z" fill="#888"/><path d="M2 13 H15 M5 10 L4 16 M11 10 L12 16" stroke="#eee"/><svg x="1" y="0" width="14" height="14"><use href="#ball"/></svg></svg></button><i class="caret"></i>
                <button aria-label="View settings"><svg width="16" height="16" viewBox="0 0 16 16"><rect x=".5" y="2.500" width="14" height="10" fill="#d0d6dd" stroke="#555"/><path d="M4 15 H11 M7.500 13 V15" stroke="#555" stroke-width="2"/><path d="M3 8 L8 2 H15 L16 4 L11 8 L8 6 Z" fill="#e8b070" stroke="#8a6030" stroke-width=".7"/></svg></button><i class="caret"></i>
            </div>
            <div class="docbtns">
                <button aria-label="Previous pane"><svg width="14" height="14" viewBox="0 0 14 14"><rect x=".5" y=".5" width="12" height="12" fill="#fff" stroke="#777a85"/><path d="M5.500 4 H3.500 V9.500 H5.500" fill="none" stroke="#777a85"/><rect x="7.500" y="4" width="2" height="5" fill="none" stroke="#777a85"/></svg></button>
                <button aria-label="Next pane"><svg width="14" height="14" viewBox="0 0 14 14"><rect x=".5" y=".5" width="12" height="12" fill="#fff" stroke="#777a85"/><path d="M7.500 4 H9.500 V9.500 H7.500" fill="none" stroke="#777a85"/><rect x="3.500" y="4" width="2" height="5" fill="none" stroke="#777a85"/></svg></button>
                <button aria-label="Minimize document"><svg width="13" height="14" viewBox="0 0 13 14"><rect x=".5" y="9.500" width="11" height="4" rx="1" fill="#fff" stroke="#777a85"/></svg></button>
                <button aria-label="Restore document"><svg width="16" height="14"><use href="#restore"/></svg></button>
                <button aria-label="Close document"><svg width="14" height="14"><use href="#close"/></svg></button>
            </div>
            <div class="corner">
                <svg width="66" height="60" viewBox="0 0 66 60"><path d="M16 2 H2 V16 C2 21 5 24 10 24 H16" fill="none" stroke="#d4d8fb" stroke-width="2"/><path d="M2 17 L7 12 L20 5 L23 9 L10 16 Z" fill="#fbf0cc" stroke="#d8d4c0"/><path d="M18 6 L22 4 L24 8 L21 10 Z" fill="#f6cccc"/><path d="M24 15 C34 17 34 30 24 33 V37 L15 30 L24 22 V27 C28 25 28 19 24 15 Z" fill="#e9dcf6" stroke="#d8c8e8"/><path d="M43 37 L62 56 M62 37 L43 56" stroke="#eab4b4" stroke-width="5"/><path d="M43 37 L62 56 M62 37 L43 56" stroke="#fbd0d0" stroke-width="3"/></svg>
            </div>
            <div class="tooltip">Boss-Extrude1</div>
        </main>

        <nav class="taskpane">
            <button aria-label="Forum"><svg width="16" height="16" viewBox="0 0 16 16"><path d="M0 1 H12 V10 H6 L3 13 V10 H0 Z" fill="#5aa8e8" stroke="#2c70b0"/><path d="M5 6 H16 V13 H13 L12 16 L9 13 H5 Z" fill="#a8d820" stroke="#5c8c08"/></svg></button>
            <button aria-label="Resources"><svg width="16" height="16" viewBox="0 0 16 16"><path d="M2.500 8 V15.500 H13.500 V8 L8 3 Z" fill="#fff8c8" stroke="#8c5c00"/><path d="M0 9 L8 1.500 L15.500 9" fill="none" stroke="#c88a00" stroke-width="2.200"/><path d="M12.500 6 V1" stroke="#c03030" stroke-width="2.500"/><rect x="6" y="9" width="4" height="6" fill="#e8a820" stroke="#8c5c00"/></svg></button>
            <button aria-label="Design library"><svg width="16" height="16" viewBox="0 0 16 16"><path d="M1 6 L5 8 V16 L1 14 Z" fill="#1ca838" stroke="#064"/><path d="M6 4 L10 6 V16 L6 14 Z" fill="#f4c420" stroke="#860"/><path d="M11 2 L15 1 V15 H11 Z" fill="#5a8ce8" stroke="#14458c"/></svg></button>
            <button aria-label="File explorer"><svg width="16" height="16" viewBox="0 0 16 16"><path d="M1 13 V3 H6 L7 5 H13 V7" fill="#ffdf70" stroke="#a06a08"/><path d="M4 7 H15.500 L12 14 H1 Z" fill="#ffe89a" stroke="#a06a08"/></svg></button>
            <button aria-label="View palette"><svg width="16" height="16" viewBox="0 0 16 16"><rect x="1" y=".5" width="14.500" height="11" fill="#eef4fc" stroke="#35537c"/><rect x="3" y="2.500" width="5" height="2" fill="#f4d020" stroke="#555" stroke-width=".5"/><rect x="3" y="7" width="5" height="2.500" fill="#f4d020" stroke="#555" stroke-width=".5"/><path d="M10 2.500 H14 V5 H10 Z M10 8.500 H14" stroke="#35537c" fill="none"/><path d="M1 14 H7 M5 12 L8 14 L5 16" fill="none" stroke="#1414c8" stroke-width="1.800"/></svg></button>
            <button class="active" aria-label="Appearances"><svg width="16" height="16"><use href="#ball"/></svg></button>
            <button aria-label="Custom properties"><svg width="16" height="16"><use href="#hand-page"/></svg></button>
        </nav>
    </div>

    <div class="sheets">
        <div class="navs"><button aria-label="First" disabled><svg width="10" height="10" viewBox="0 0 10 10"><path d="M1 0 V10" stroke="#888"/><path d="M8 0 V10 L2 5 Z" fill="#888"/></svg></button><button aria-label="Previous" disabled><svg width="10" height="10" viewBox="0 0 10 10"><path d="M7 0 V10 L2 5 Z" fill="#888"/></svg></button><button aria-label="Next" disabled><svg width="10" height="10" viewBox="0 0 10 10"><path d="M3 0 V10 L8 5 Z" fill="#888"/></svg></button><button aria-label="Last" disabled><svg width="10" height="10" viewBox="0 0 10 10"><path d="M2 0 V10 L8 5 Z" fill="#888"/><path d="M9 0 V10" stroke="#888"/></svg></button></div>
        <button class="sheet active">Model</button><button class="sheet">Motion Study 1</button>
    </div>
    <footer class="status">
        <span class="msg">Set the properties of the selected dimension(s).</span>
        <span class="c1">-20.32mm</span><span class="c2">-8.89mm</span><span class="c3">0mm</span><span class="c4">Under Defined</span><span class="c5">Editing Sketch11</span>
        <svg width="14" height="14"><use href="#traffic"/></svg>
        <span class="units">MMGS</span><i class="caret up"></i>
        <svg class="qh" width="14" height="14" viewBox="0 0 14 14"><rect x=".5" y=".5" width="13" height="13" fill="#f0fff0" stroke="#2c5a80"/><text x="7" y="11" text-anchor="middle" fill="#0c9a1c">?</text></svg>
        <svg class="tag" width="16" height="16" viewBox="0 0 16 16"><path d="M1 10 L9 2 C12 0 16 3 14 7 L7 15 C4 15 1 13 1 10 Z" fill="#f8c838" stroke="#8a5a00"/><path d="M5 10 L10 5 M7 12 L12 7" stroke="#a87408"/></svg>
    </footer>
</body>
</html>
```
FILE: styles.css
```css
* {
    box-sizing: border-box;
}
body {
    margin: 0;
    height: 100vh;
    display: flex;
    flex-direction: column;
    overflow: hidden;
    font-family: "Open Sans", "Noto Sans", sans-serif;
    font-size: 11px;
    line-height: 13px;
    color: #222;
    background-color: #d7dadf;
}
button, input, select, textarea {
    font: inherit;
    color: inherit;
    margin: 0;
}
button {
    border: 0;
    padding: 0;
    background: none;
}
svg {
    display: block;
    flex: none;
}
.defs {
    position: absolute;
    width: 0;
    height: 0;
}
.caret {
    display: inline-block;
    flex: none;
    border: 3px solid transparent;
    border-top: 4px solid #333;
    border-bottom: 0;
}
.caret.up {
    border-top: 0;
    border-bottom: 4px solid #333;
}

/* menu bar */
.menubar {
    display: flex;
    align-items: center;
    height: 29px;
    flex: none;
    border-bottom: 1px solid #111;
    background: linear-gradient(#f2f3f5, #d7dadf 2px);
}
.logo {
    display: flex;
    align-items: center;
    gap: 4px;
    width: 131px;
    height: 28px;
    padding-left: 3px;
    border-left: 5px solid #d9281c;
    background: linear-gradient(#3d4a52, #14191c);
    color: #fff;
    font-family: Lato, sans-serif;
    font-style: italic;
    font-size: 14px;
}
.menus {
    display: flex;
    align-items: center;
    justify-content: space-between;
    width: 334px;
    height: 28px;
    padding: 0 5px 0 18px;
    background-color: #abacb0;
    border-right: 1px solid #8b8c90;
}
.quick {
    display: flex;
    align-items: center;
    gap: 7px;
    padding-left: 5px;
}
.title {
    flex: 1;
    padding-left: 2px;
    text-align: center;
}
.search {
    display: flex;
    align-items: center;
    gap: 5px;
    width: 202px;
    height: 22px;
    padding: 0 2px 0 5px;
    border: 1px solid #111;
    background-color: #e9ebef;
}
.search input {
    flex: 1;
    min-width: 0;
    border: 0;
    padding: 0;
    background: none;
}
.search input::placeholder {
    color: #555;
    opacity: 1;
}
.winbtns {
    display: flex;
    align-items: center;
    gap: 8px;
    padding: 0 5px 0 8px;
}

/* ribbon */
.ribbon {
    display: flex;
    height: 77px;
    flex: none;
    padding: 2px 6px 6px;
    border-bottom: 1px solid #111;
    background-color: #d7dadf;
}
.big {
    display: flex;
    flex-direction: column;
    align-items: center;
    position: relative;
    width: 49px;
    padding-top: 5px;
}
.big svg {
    margin-bottom: 1px;
}
.big .caret {
    margin-top: 11px;
}
.big.low {
    padding-top: 12px;
}
.big.wide {
    width: 88px;
}
.big.narrow {
    width: 42px;
}
.big:disabled {
    color: #8c8e92;
}
.big:disabled .caret {
    border-top-color: #8c8e92;
}
.pressed {
    border: 1px solid #85868a;
    padding-top: 4px;
    background: linear-gradient(#b4b6ba 54px, #85868a 54px, #85868a 55px, #d7dadf 55px);
}
.big.exit {
    width: 44px;
}
.big.smart {
    width: 65px;
}
.sep {
    width: 1px;
    margin: 2px 1px 0;
    background-color: #55575c;
}
.tools {
    display: grid;
    grid-template-columns: 36px 36px 36px 20px;
    grid-auto-rows: 23px;
    padding-left: 3px;
}
.tools button {
    display: flex;
    align-items: center;
    gap: 6px;
}
.rows {
    display: flex;
    flex-direction: column;
    width: 167px;
    padding-left: 1px;
}
.rows button {
    display: flex;
    align-items: center;
    gap: 7px;
    height: 23px;
    padding-right: 4px;
}
.rows .caret {
    margin-left: auto;
}

/* command tabs */
.workspace {
    flex: 1;
    min-height: 0;
    display: flex;
    position: relative;
    background-color: #fff;
    border-bottom: 1px solid #111;
}
.cmdtabs {
    display: flex;
    align-items: flex-start;
    position: absolute;
    top: 0;
    left: 0;
    z-index: 2;
}
.cmdtabs button {
    height: 19px;
    padding: 0 8px 3px;
    border: 1px solid #222;
    border-width: 0 1px 1px 0;
    background-color: #abacb0;
}
.cmdtabs .active {
    height: 21px;
    padding-bottom: 4px;
    font-weight: bold;
    background-color: #dfe2e7;
}

/* property panel */
.panel {
    position: relative;
    flex: none;
    width: 225px;
    padding-top: 28px;
    border-right: 2px solid #222;
    background: linear-gradient(#d7dadf 21px, #7c839c 21px, #7c839c 22px, #d7dadf 22px, #d7dadf 23px, #7c839c 23px, #7c839c 24px, #e3e6eb 24px);
}
.ptabs {
    display: flex;
    gap: 1px;
    height: 22px;
    border-bottom: 1px solid #222;
}
.ptabs button {
    display: flex;
    align-items: center;
    justify-content: center;
    width: 27px;
    height: 21px;
    border: 1px solid #222;
    border-bottom: 0;
    background-color: #abacb0;
}
.ptabs .active {
    height: 22px;
    background-color: #e3e6eb;
    border-color: #fff;
}
.pm-title {
    display: flex;
    align-items: center;
    gap: 4px;
    height: 24px;
    margin: 5px 3px 6px 2px;
    padding: 0 6px 0 2px;
    border: 1px solid #222;
    background: linear-gradient(#c0c1c4, #a9abae 3px);
}
.pm-title .q {
    margin-left: auto;
    color: #eee;
    font-weight: bold;
    font-size: 14px;
}
.ok {
    display: block;
    margin-left: 4px;
}
.vtabs {
    display: flex;
    gap: 2px;
    height: 24px;
    margin: 16px 0;
    padding: 0 2px;
    border-bottom: 1px solid #222;
}
.vtabs button {
    height: 23px;
    padding: 0 4px;
    border: 1px solid #222;
    border-bottom: 0;
    background-color: #abacb0;
}
.vtabs .active {
    height: 24px;
    padding: 0 5px;
    background-color: #e3e6eb;
}
.box {
    margin: 0 2px 12px 3px;
    padding: 0 4px 2px 3px;
    width: 216px;
    border: 1px solid #222;
    background-color: #d7dadf;
}
.box h2 {
    display: flex;
    align-items: center;
    justify-content: space-between;
    height: 19px;
    margin: 0 -4px 0 -3px;
    padding: 0 5px 1px 3px;
    border-bottom: 1px solid #222;
    background: linear-gradient(#c0c1c4, #a9abae 3px);
    font-size: 11px;
}
.btnrow {
    display: flex;
    gap: 2px;
    padding-top: 3px;
}
.btnrow.tight {
    padding-top: 2px;
}
.btnrow.stars {
    gap: 0;
    padding: 3px 0 5px 30px;
}
.tb {
    display: flex;
    align-items: center;
    justify-content: center;
    flex: none;
    width: 24px;
    height: 24px;
    border: 1px solid #909298;
    background-color: #dfe1e5;
    box-shadow: inset 1px 1px #fff;
}
.tb.on {
    background-color: #abacb0;
    box-shadow: inset 1px 1px #77797e;
}
.tb.second {
    margin-left: 19px;
}
.tb text {
    font-size: 11px;
}
.field {
    display: flex;
    align-items: center;
    justify-content: space-between;
}
.field.gap {
    padding: 5px 0 12px;
}
.mini text {
    font-family: "Liberation Sans", sans-serif;
    font-size: 8px;
}
.sel {
    position: relative;
    width: 172px;
}
.sel select {
    appearance: none;
    display: block;
    width: 100%;
    height: 21px;
    padding: 0 4px;
    border: 1px solid #aaa;
    border-radius: 0;
    background-color: #e1e1e1;
    color: #111;
}
.sel svg {
    position: absolute;
    right: 4px;
    top: 8px;
}
.box input[type="text"] {
    height: 20px;
    padding: 0 6px;
    border: 1px solid #7a7a7a;
    background-color: #fff;
    color: #334;
}
.field.name {
    padding: 3px 0 8px;
}
.field.name input {
    width: 172px;
}
.field.val input[type="text"] {
    width: 151px;
    height: 23px;
    margin-left: 10px;
    padding-bottom: 3px;
}
.spin {
    display: flex;
    flex-direction: column;
    gap: 1px;
}
.spin button {
    display: flex;
    align-items: center;
    justify-content: center;
    width: 20px;
    height: 11px;
    background-color: #eee;
}
textarea {
    display: block;
    width: 207px;
    height: 65px;
    margin: 8px 0 6px;
    padding: 0 1px;
    border: 1px solid #aaa;
    background-color: #fff;
    resize: none;
    font-family: "Liberation Sans", sans-serif;
    font-size: 10px;
    line-height: 11px;
}
.btnrow.last {
    padding-top: 8px;
}
.more {
    width: 48px;
    height: 21px;
    margin-top: 1px;
    border: 1px solid #aaa;
    background-color: #e1e1e1;
}
.dual {
    padding-bottom: 0;
}
.dual h2 {
    border-bottom: 0;
}
.dual label {
    flex: 1;
    padding-left: 11px;
}
.dual input {
    appearance: none;
    width: 12px;
    height: 12px;
    border: 1px solid #222;
    background-color: #fff;
}
.splitter {
    display: flex;
    flex-direction: column;
    align-items: center;
    justify-content: space-around;
    position: absolute;
    left: 222px;
    top: 435px;
    z-index: 2;
    width: 10px;
    height: 39px;
    padding: 4px 0;
    border: 1px solid #222;
    border-left: 0;
    background-color: #e3e6eb;
}
.splitter i {
    border: 3px solid transparent;
    border-left: 0;
    border-right: 4px solid #222;
}

/* graphics area */
.view {
    flex: 1;
    position: relative;
    min-width: 0;
    overflow: hidden;
    border-right: 4px solid #3c4a60;
}
.scene {
    width: 100%;
    height: 100%;
}
.scene .dimval text {
    font-family: Lato, sans-serif;
    font-size: 14px;
    font-weight: 900;
    fill: #111;
}
.scene .axisname text {
    font-family: Lato, sans-serif;
    font-size: 14px;
    font-weight: 300;
    fill: #1111ff;
}
.scene .triad text {
    font-size: 10px;
}
.flyout {
    display: flex;
    align-items: center;
    gap: 4px;
    position: absolute;
    left: 1px;
    top: 24px;
    color: #111;
}
.hud {
    display: flex;
    align-items: center;
    justify-content: center;
    gap: 7px;
    position: absolute;
    left: 0;
    right: 6px;
    top: 5px;
    pointer-events: none;
}
.hud .caret {
    margin-right: 1px;
    border-top-color: #666;
}
.docbtns {
    display: flex;
    gap: 9px;
    position: absolute;
    right: 11px;
    top: 7px;
}
.corner {
    position: absolute;
    right: 42px;
    top: 28px;
}
.tooltip {
    position: absolute;
    left: 459px;
    top: 518px;
    padding: 2px 5px 3px;
    border: 1px solid #777;
    background-color: rgba(255, 255, 255, .95);
    box-shadow: 3px 3px 2px rgba(0, 0, 0, .4);
    color: #555;
}
.taskpane {
    position: absolute;
    right: 0;
    top: 59px;
}
.taskpane button {
    display: flex;
    align-items: center;
    justify-content: center;
    width: 24px;
    height: 24px;
    border: 1px solid #111;
    border-right: 0;
    background-color: #abacb0;
    box-shadow: inset 1px 1px #e3e6eb;
}
.taskpane .active {
    background-color: #e8eaee;
}

/* sheet tabs and status bar */
.sheets {
    display: flex;
    flex: none;
    height: 15px;
    border-bottom: 1px solid #111;
    background-color: #e3e6eb;
}
.navs {
    display: flex;
    width: 68px;
    padding-left: 2px;
}
.navs button {
    display: flex;
    align-items: center;
    justify-content: center;
    width: 16px;
    border: 1px solid #999;
    background-color: #b4b5b8;
}
.sheet {
    padding: 0 14px 1px 9px;
    border: 1px solid #222;
    border-width: 0 1px;
    background-color: #abacb0;
}
.sheet.active {
    padding: 0 10px 1px;
    font-weight: bold;
    background-color: #e3e6eb;
}
.status {
    display: flex;
    align-items: center;
    flex: none;
    height: 19px;
    padding: 0 4px 0 2px;
    background-color: #d7dadf;
}
.status .msg {
    flex: 1;
}
.status .c1 {
    width: 78px;
}
.status .c2 {
    width: 63px;
}
.status .c3 {
    width: 49px;
}
.status .c4 {
    width: 94px;
}
.status .c5 {
    width: 103px;
}
.status .units {
    width: 54px;
    margin-left: 36px;
}
.status .qh {
    margin-left: 17px;
    font-size: 11px;
    font-weight: bold;
}
.status .tag {
    margin-left: 50px;
}
```
